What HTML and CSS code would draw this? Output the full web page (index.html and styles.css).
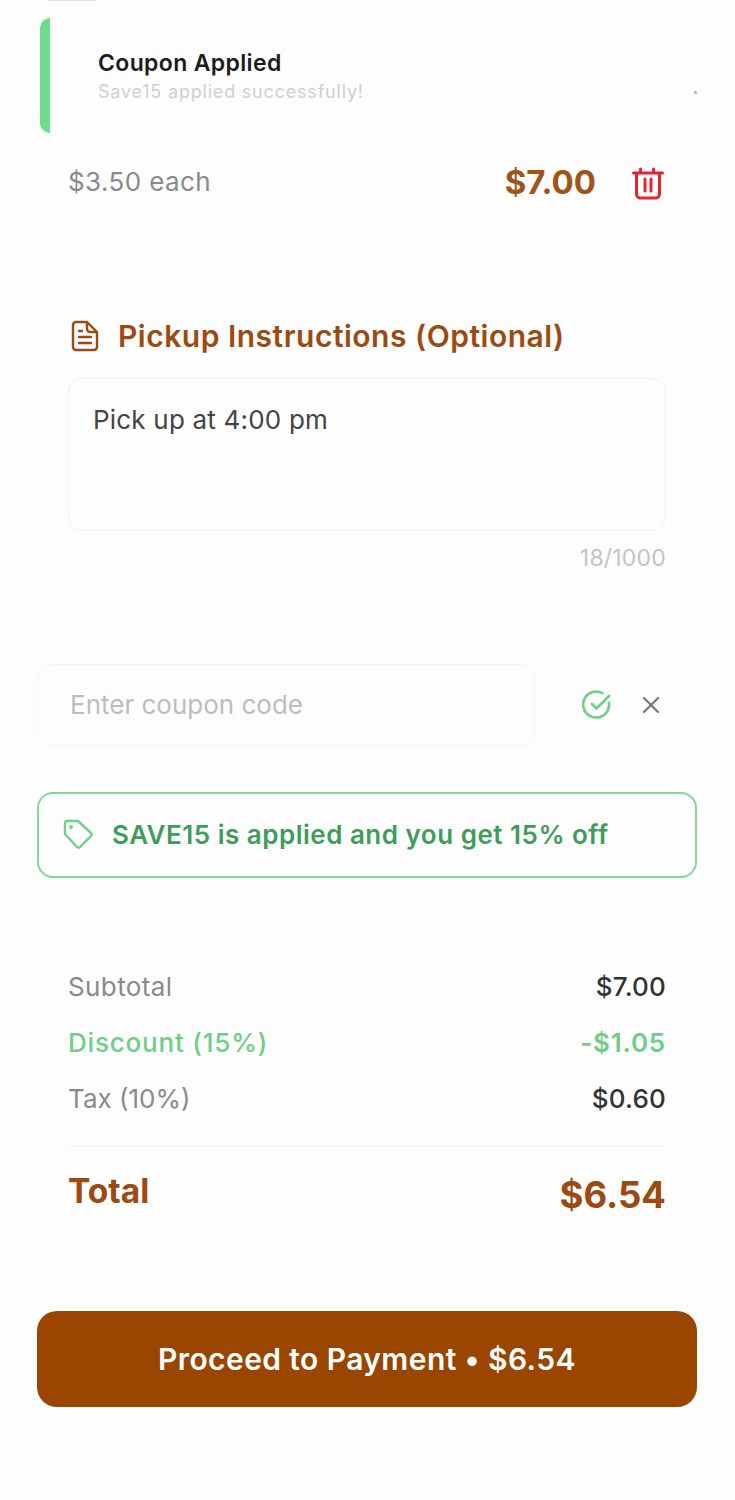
FILE: index.html
```html
<!DOCTYPE html>
<html lang="en">
<head>
  <meta charset="UTF-8">
  <title>Checkout</title>
  <link rel="stylesheet" href="styles.css">
</head>
<body>

  <div class="page">
    <div class="top-sliver"></div>

    <div class="toast">
      <div class="toast-title">Coupon Applied</div>
      <div class="toast-text">Save15 applied successfully!</div>
      <span class="toast-dot"></span>
    </div>

    <div class="item-row">
      <span class="item-each">$3.50 each</span>
      <span class="item-price">$7.00</span>
      <svg class="trash-icon" viewBox="0 0 32 33" fill="none" stroke="#e8222e" stroke-width="3" stroke-linecap="round" stroke-linejoin="round">
        <path d="M1.5 6h29M8.5 6V2M21.5 6V2M4.5 6v21a4 4 0 0 0 4 4h15a4 4 0 0 0 4-4V6M13 12v12M19 12v12"/>
      </svg>
    </div>

    <div class="section-title">
      <svg class="doc-icon" viewBox="0 0 28 32" fill="none" stroke="#9c4a10" stroke-width="2.4" stroke-linecap="round" stroke-linejoin="round">
        <path d="M5 2h11l10 10v15a3 3 0 0 1-3 3H5a3 3 0 0 1-3-3V5a3 3 0 0 1 3-3zM16 2v7a3 3 0 0 0 3 3h7M8 11h3M8 17h12M8 23h12"/>
      </svg>
      <span>Pickup Instructions (Optional)</span>
    </div>

    <div class="notes-box">Pick up at 4:00 pm</div>
    <div class="notes-count">18/1000</div>

    <div class="coupon-row">
      <div class="coupon-input">Enter coupon code</div>
      <svg class="check-icon" viewBox="0 0 30 30" fill="none" stroke="#6fd08a" stroke-width="2.6" stroke-linecap="round" stroke-linejoin="round">
        <path d="M27 12.5A13 13 0 1 1 20.5 3.2M10 14l4.5 4.5L27 6"/>
      </svg>
      <svg class="close-icon" viewBox="0 0 20 20" fill="none" stroke="#777" stroke-width="2.2" stroke-linecap="round">
        <path d="M3 3l14 14M17 3L3 17"/>
      </svg>
    </div>

    <div class="applied-box">
      <svg class="tag-icon" viewBox="0 0 32 32" fill="none" stroke="#6fd08a" stroke-width="2.4" stroke-linecap="round" stroke-linejoin="round">
        <path d="M3 5a2 2 0 0 1 2-2h11l13 12a2 2 0 0 1 0 3L18 29a2 2 0 0 1-3 0L3 16z"/>
        <circle cx="9" cy="9" r="0.8"/>
      </svg>
      <span>SAVE15 is applied and you get 15% off</span>
    </div>

    <div class="summary">
      <div class="summary-row">
        <span class="label">Subtotal</span>
        <span class="value">$7.00</span>
      </div>
      <div class="summary-row discount">
        <span>Discount (15%)</span>
        <span class="discount-value">-$1.05</span>
      </div>
      <div class="summary-row">
        <span class="label label-tax">Tax (10%)</span>
        <span class="value">$0.60</span>
      </div>
      <div class="total-row">
        <span class="total-label">Total</span>
        <span class="total-value">$6.54</span>
      </div>
    </div>

    <button class="pay-btn" type="button">Proceed to Payment • $6.54</button>
  </div>

</body>
</html>
```

FILE: styles.css
```css
body {
  margin: 0;
  background-color: #fdfdfd;
  font-family: Inter, "Liberation Sans", sans-serif;
}

.page {
  position: relative;
  height: 1500px;
  overflow: hidden;
  padding: 18px 38px 0 37px;
  box-sizing: border-box;
}

.top-sliver {
  position: absolute;
  top: 0;
  left: 47px;
  width: 50px;
  height: 1px;
  background-color: #f3dcdc;
}

.toast {
  position: relative;
  height: 115px;
  margin-left: 3px;
  padding: 32px 0 0 48px;
  box-sizing: border-box;
  border-left: 10px solid #6fdc8c;
  border-radius: 10px 0 0 10px;
}

.toast-title {
  font-size: 23px;
  font-weight: 600;
  letter-spacing: 0.35px;
  line-height: 27px;
  color: #1c1c1e;
}

.toast-text {
  margin-top: 5px;
  font-size: 18px;
  letter-spacing: 0.8px;
  line-height: 20px;
  color: #d0d0d0;
}

.toast-dot {
  position: absolute;
  top: 73px;
  right: 0;
  width: 3px;
  height: 3px;
  border-radius: 50%;
  background-color: #ee8fa0;
}

.item-row {
  display: flex;
  align-items: center;
  margin-top: 26px;
  padding: 0 33px 0 31px;
  height: 46px;
}

.item-each {
  flex: 1;
  margin-bottom: 2px;
  font-size: 26px;
  letter-spacing: 0.4px;
  color: #8a8a8a;
}

.item-price {
  font-size: 33px;
  font-weight: 700;
  color: #a0541a;
}

.trash-icon {
  width: 32px;
  height: 33px;
  margin: 3px 0 0 36px;
}

.section-title {
  display: flex;
  align-items: center;
  gap: 19px;
  margin: 111px 0 0 34px;
  height: 40px;
  font-size: 30px;
  font-weight: 600;
  letter-spacing: 0.5px;
  color: #9c4a10;
}

.doc-icon {
  width: 28px;
  height: 32px;
}

.notes-box {
  margin: 22px 31px 0 31px;
  height: 153px;
  padding: 24px 24px;
  box-sizing: border-box;
  border: 1px solid #f1f1f1;
  border-radius: 14px;
  font-size: 26px;
  letter-spacing: 0.2px;
  line-height: 34px;
  color: #444;
}

.notes-count {
  margin: 13px 31px 0 0;
  text-align: right;
  font-size: 23px;
  letter-spacing: 0.2px;
  line-height: 28px;
  color: #c4c4c4;
}

.coupon-row {
  display: flex;
  align-items: center;
  margin-top: 92px;
}

.coupon-input {
  width: 498px;
  height: 82px;
  padding: 0 32px;
  box-sizing: border-box;
  border: 1px solid #f6f6f6;
  border-radius: 14px;
  font-size: 26px;
  line-height: 80px;
  color: #bdbdbd;
}

.check-icon {
  width: 30px;
  height: 30px;
  margin-left: 47px;
}

.close-icon {
  width: 20px;
  height: 20px;
  margin-left: 29px;
}

.applied-box {
  display: flex;
  align-items: center;
  gap: 18px;
  margin-top: 46px;
  height: 86px;
  padding: 0 23px 2px;
  box-sizing: border-box;
  border: 2px solid #84d69a;
  border-radius: 16px;
  font-size: 26px;
  font-weight: 600;
  letter-spacing: 0.5px;
  color: #3f9d5b;
}

.tag-icon {
  width: 32px;
  height: 32px;
}

.summary {
  margin: 80px 31px 0 31px;
}

.summary-row {
  display: flex;
  justify-content: space-between;
  align-items: center;
  height: 56px;
  font-size: 26px;
}

.label {
  letter-spacing: 0.4px;
  color: #8a8a8a;
}

.label-tax {
  letter-spacing: 0;
}

.value {
  font-weight: 500;
  letter-spacing: 0.2px;
  color: #333;
}

.discount {
  color: #6fcf87;
  font-weight: 500;
  letter-spacing: 0.8px;
}

.discount-value {
  font-weight: 600;
}

.total-row {
  display: flex;
  justify-content: space-between;
  align-items: flex-start;
  margin-top: 20px;
  padding-top: 26px;
  border-top: 1px solid #f3f3f3;
  font-weight: 700;
  color: #9c4a10;
}

.total-label {
  font-size: 33.5px;
  line-height: 36px;
}

.total-value {
  font-size: 36.5px;
  line-height: 44px;
}

.pay-btn {
  display: block;
  width: 100%;
  height: 96px;
  margin-top: 94px;
  border: none;
  border-radius: 20px;
  background-color: #9a4500;
  color: white;
  font-family: inherit;
  font-size: 30px;
  font-weight: 600;
  letter-spacing: 0.4px;
}
```
